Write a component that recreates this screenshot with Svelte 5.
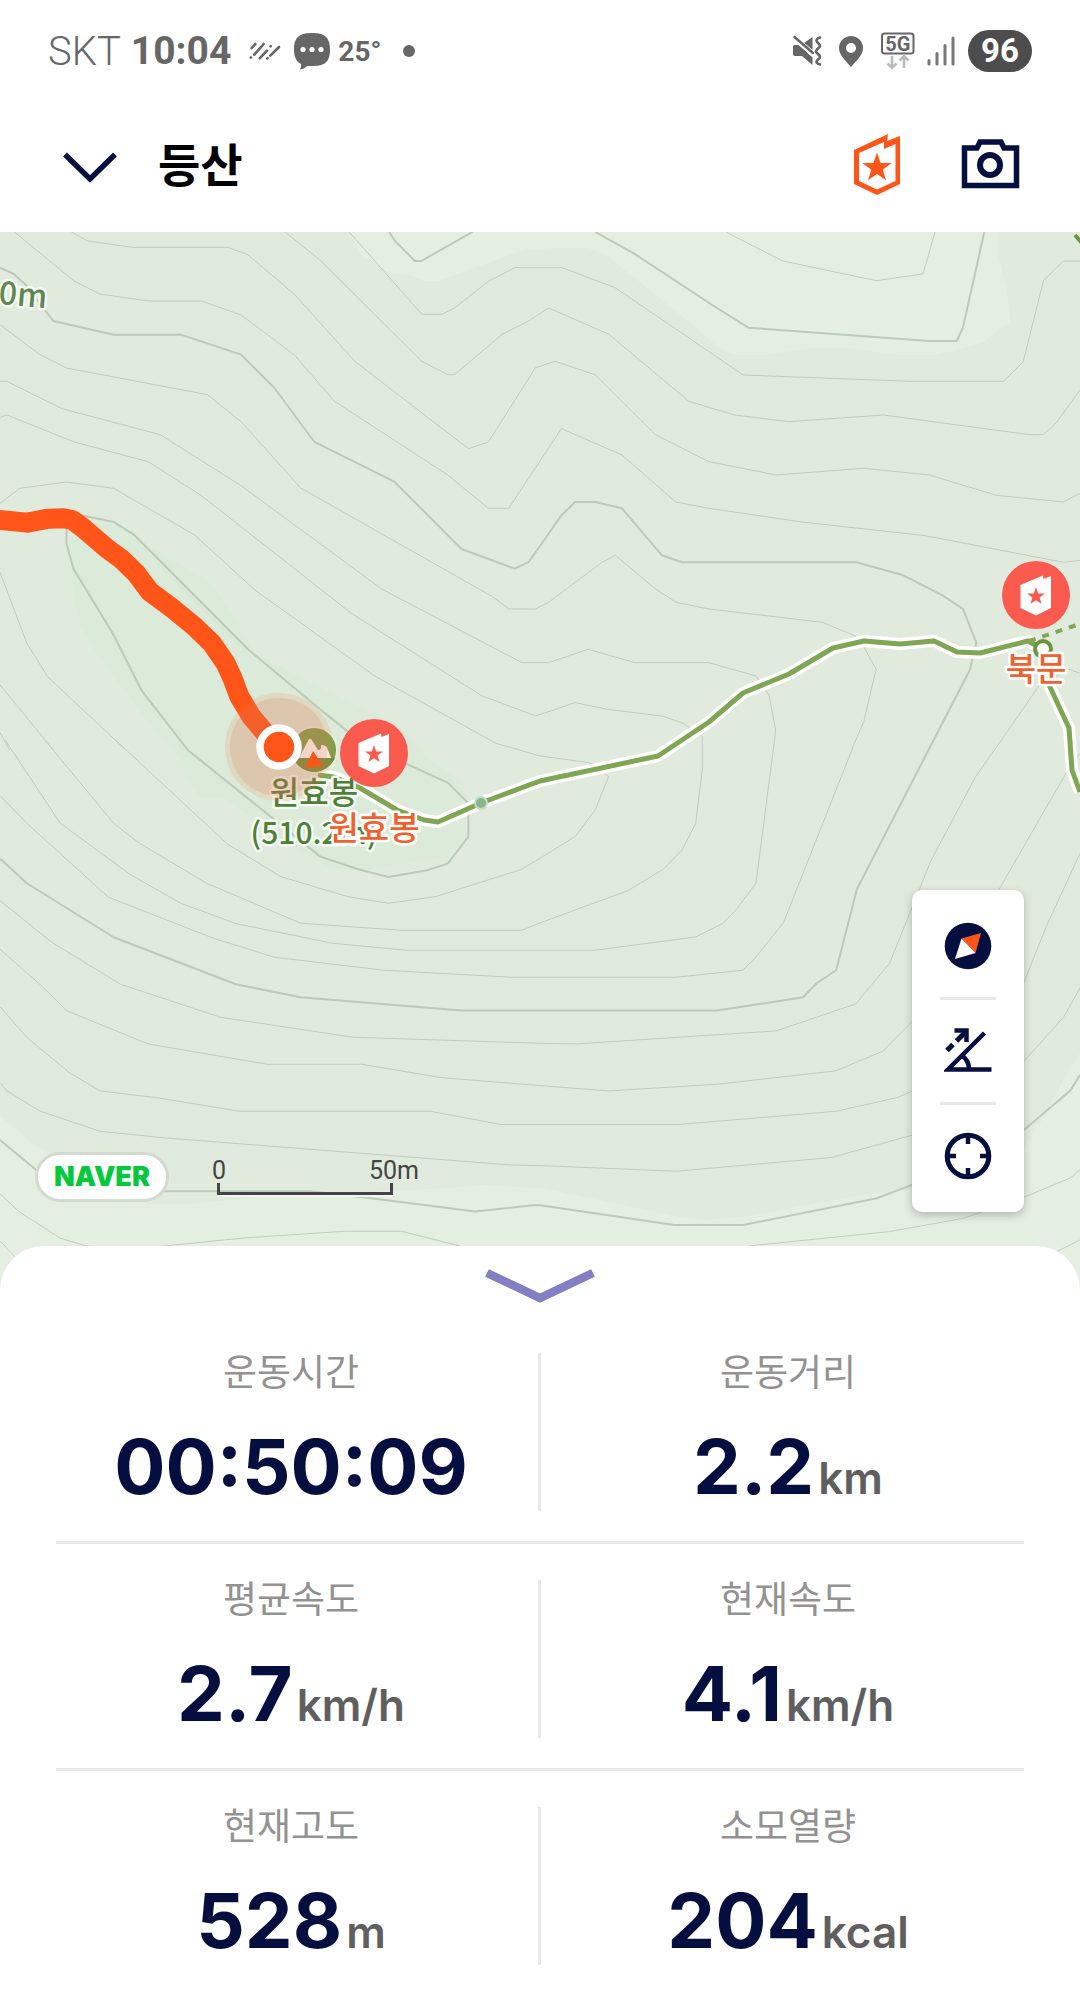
<script>
  const NAVY = '#040f40';

  // Contour lines, one entry per survey tile; x and y are the tile's origin in sheet units.
  const tiles = [
    {
      x: 0,
      y: 0,
      minor: [
        '207,6 255,33 385,52 661,52 718,73 855,193 1030,394 1360,656 1418,636 1555,413 1568,409',
        '42,6 215,153 290,192 430,213 585,213 700,255 855,375 970,513 1300,735 1418,835 1477,835 1568,693',
        '828,6 932,93 1225,394 1300,434 1320,434 1458,313 1535,273 1568,250',
        '1014,6 1225,253 1283,253 1320,234 1418,154 1495,113 1568,113',
        '0,284 115,373 193,414 602,494 700,575 873,774 1430,1100 1477,1137 1555,1137 1568,1130',
        '0,454 20,454 180,536 465,614 700,767 1108,1077 1515,1298 1568,1298',
        '0,562 20,555 215,636 430,695 585,797 1020,1150 1400,1398 1555,1458 1568,1454',
        '0,820 58,775 193,756 330,775 565,915 740,1080 1088,1338 1440,1540 1568,1578',
        '0,1027 78,1240 138,1340 365,1560',
        '0,1365 155,1560',
        '0,1508 28,1560'
      ],
      major: [
        '0,113 40,132 75,165 130,240 155,273 330,314 525,314 700,374 797,474 913,636 1146,756 1340,957 1495,1016 1535,996 1568,948',
        '1130,6 1147,33 1205,93 1223,93 1372,6',
        '193,880 193,940 213,1016 330,1215 412,1383 545,1560 930,1880 1040,1918 1128,1941 1240,1921 1300,1901 1360,1820 1360,1720 1300,1658 1180,1602 1010,1505 920,1430 720,1258 390,915 330,876 235,856'
      ]
    },
    {
      x: 1568,
      y: 0,
      minor: [
        '0,693 62,596 238,675 394,816 490,835 760,876 1118,917 1520,997 1568,991',
        '0,409 44,394 160,434 335,614 490,695 685,735 940,715 1130,735 1325,796 1520,816 1568,790',
        '0,250 25,234 200,313 432,514 565,555 722,575 997,555 1420,614 1462,614 1500,577 1568,480',
        '0,113 64,113 218,173 590,435 1075,454 1346,454 1403,395 1462,152 1520,93 1568,93',
        '540,6 600,38 705,93 976,152 1112,132 1147,6',
        '471,1530 471,1518 415,1480 358,1459 195,1438 102,1418 0,1454',
        '681,1530 684,1500 665,1395 627,1338 490,1298 275,1298 140,1258 25,1298 0,1298',
        '917,1530 940,1475 976,1318 940,1250 915,1218 820,1177 490,1137 395,1117 335,1077 219,976 180,997 25,1117 0,1130',
        '1340,1530 1450,1366 1535,1318 1568,1330'
      ],
      major: [
        '160,6 275,72 500,225 605,293 1130,333 1210,333 1228,293 1290,6',
        '1143,1530 1248,1320 1267,1238 1228,1137 1170,1097 1055,1036 918,997 412,997 354,976 238,835 160,816 102,816 62,856 0,948'
      ]
    },
    {
      x: 0,
      y: 1530,
      minor: [
        '335,0 660,312 815,410 1010,470 1128,490 1265,470 1515,388 1568,355',
        '130,0 330,250 405,310 600,430 873,550 1165,571 1515,571 1568,549',
        '15,0 175,250 380,405 525,490 685,551 965,610 1180,631 1568,631',
        '0,167 78,250 315,472 620,595 797,652 1115,691 1490,712 1568,712',
        '0,482 150,607 350,733 640,832 1025,892 1568,910',
        '0,628 120,737 193,812 430,912 775,973 1050,973 1280,1013 1568,1037',
        '0,800 78,893 200,997 290,1053 460,1074 695,1114 1250,1114 1455,1154 1568,1154',
        '0,1028 20,1053 115,1113 290,1174 480,1194 1480,1275 1568,1277',
        '0,1362 55,1415 175,1495 250,1518 360,1530 480,1518 700,1495 1000,1474 1165,1474 1335,1518',
        '0,1503 42,1550'
      ],
      major: [
        '0,356 78,430 330,592 685,733 873,772 1340,812 1568,812',
        '0,1200 105,1290 180,1354 900,1354 1060,1373 1380,1415 1555,1395 1568,1396'
      ]
    },
    {
      x: 1568,
      y: 1530,
      minor: [
        '0,355 102,290 160,210 199,110 185,100 143,68 0,48',
        '0,549 255,452 358,388 412,331 452,250 471,90 471,0',
        '0,631 160,631 452,591 528,552 565,515 627,430 681,0',
        '0,712 395,712 588,691 620,660 707,548 917,0',
        '0,910 105,912 685,873 917,792 1015,670 1135,362 1265,110 1340,0',
        '0,1037 200,1053 515,1033 858,993 995,934 1080,845 1180,740 1333,448 1530,95 1568,40',
        '0,1154 400,1154 860,1114 1037,1073 1080,1054 1290,920 1405,728 1470,560 1568,340',
        '0,1277 395,1294 845,1253 1080,1186 1300,1080 1405,964 1520,832 1568,745',
        '607,1518 1015,1475 1230,1435 1405,1372 1540,1314 1568,1290',
        '1480,1546 1568,1500'
      ],
      major: [
        '0,812 515,812 764,772 803,730 860,691 920,448 1143,0',
        '0,1396 390,1455 590,1455 978,1375 1080,1335 1300,1250 1405,1170 1540,1052 1568,1005'
      ]
    }
  ];

  const lowland = [
    '1014,6 1050,75 1130,128 1185,135 1235,153 1270,153 1400,105 1530,56 1708,54 1768,80 1988,265 2098,360 2138,375 2218,375 2358,353 2468,355 2618,375 2718,375 2853,338 2888,310 2933,275 2923,180 2896,60 2896,6',
    '0,2660 100,2745 220,2820 430,2923 540,2923 780,2900 1300,2875 1400,2865 1568,2875 1668,2895 1968,2960 2048,2970 2168,2960 2498,2895 2648,2880 2968,2760 3038,2650 3098,2530 3136,2470 3136,3180 0,3180'
  ];
  const summit =
    '200,870 350,890 450,960 600,1050 640,1100 740,1270 1000,1410 1150,1480 1250,1590 1330,1645 1360,1720 1345,1830 1300,1880 1050,1920 960,1915 800,1820 650,1702 580,1702 530,1620 520,1580 440,1490 280,1270 235,1190 215,1110';

  const trail =
    '318,775 334,777 360,788 397,810 424,820 438,822 481,803 540,781 658,756 709,722 743,693 789,674 833,648 864,641 900,644 934,641 957,652 980,653 1028,641 1043,649 1050,687 1069,728 1072,770 1080,792';
  const walked =
    '-10,869 80,878 140,866 185,865 210,870 240,893 310,955 350,985 395,1030 435,1085 500,1135 565,1190 615,1240 655,1300 675,1345 695,1400 730,1460 805,1552';

  const checkpoints = [
    { name: '원효봉', x: 374, y: 753, labelY: 840 },
    { name: '북문', x: 1036, y: 595, labelY: 681 }
  ];

  const rows = [
    [
      { label: '운동시간', value: '00:50:09', unit: '' },
      { label: '운동거리', value: '2.2', unit: 'km' }
    ],
    [
      { label: '평균속도', value: '2.7', unit: 'km/h' },
      { label: '현재속도', value: '4.1', unit: 'km/h' }
    ],
    [
      { label: '현재고도', value: '528', unit: 'm' },
      { label: '소모열량', value: '204', unit: 'kcal' }
    ]
  ];
</script>

<div class="screen">
  <div class="status">
    <div class="status-group">
      <span class="carrier">SKT</span>
      <span class="clock">10:04</span>
      <svg class="rain" width="34" height="24" viewBox="0 0 34 24" fill="none" stroke="#666" stroke-width="2.600" stroke-linecap="round">
        <path d="M7.300 5L3.700 9M15.700 5L6.300 15.700M3 18.500l-.200.200M22.700 7.200l-.200.200M19 11.700L11.700 19.300M31 8L22.300 16.700M19.500 19.200l-.200.300" />
      </svg>
      <svg class="bubble" width="36" height="38" viewBox="0 0 36 38">
        <path fill="#666" d="M18 1C29 1 36 4 36 17.500S30 34 18 34H13C11 36 8 37.500 6 37.500C7 35.500 7.300 34 7 32C2.500 30 0 25 0 17.500C0 4 7 1 18 1z" />
        <g fill="#fff"><circle cx="9" cy="17.500" r="2.600" /><circle cx="18" cy="17.500" r="2.600" /><circle cx="27" cy="17.500" r="2.600" /></g>
      </svg>
      <span class="temp">25°</span>
      <span class="more"></span>
    </div>
    <div class="status-group">
      <svg class="mute" width="30" height="32" viewBox="0 0 30 32">
        <path fill="#666" d="M20.500 2v13L12 8zM1 11.500C1 10.500 2 10 3 10h4L20.500 22.500V30L10 21H3C1.500 21 1 20 1 19z" />
        <path d="M2.500 3L21 19" stroke="#fff" stroke-width="5" />
        <path d="M2.500 2L21 18" stroke="#666" stroke-width="2.400" stroke-linecap="round" />
        <path d="M28 2.500q-5 1.500-3 4.500l2 2q2 2 0 3.500l-2 2q-2 2 0 3.500l2 2q2 2 0 3.500l-2 2q-2 2.500 3 4" fill="none" stroke="#666" stroke-width="2.600" stroke-linecap="round" />
      </svg>
      <svg class="pin" width="24" height="31" viewBox="0 0 24 31">
        <path fill="#666" fill-rule="evenodd" d="M12 0a12 12 0 0 1 12 12c0 7-6 12-12 19C6 24 0 19 0 12A12 12 0 0 1 12 0zm0 7a5 5 0 1 0 0 10a5 5 0 0 0 0-10z" />
      </svg>
      <svg class="network" width="34" height="38" viewBox="0 0 34 38">
        <rect x="1" y="1.500" width="31.500" height="20" rx="2.500" fill="none" stroke="#666" stroke-width="2" />
        <text x="16.800" y="18.500" text-anchor="middle">5G</text>
        <path d="M11 24v12M6.500 31.500L11 36l4.500-4.500M23 36V24M18.500 28.500L23 24l4.500 4.500" fill="none" stroke="#bbb" stroke-width="2.600" />
      </svg>
      <svg class="signal" width="28" height="30" viewBox="0 0 28 30" stroke="#777" stroke-width="3" stroke-linecap="round">
        <path d="M2 24.500V28M10 17.500V28M18 9.500V28M26 2V28" />
      </svg>
      <span class="battery">96</span>
    </div>
  </div>

  <header class="bar">
    <button class="icon-button" aria-label="뒤로">
      <svg width="60" height="60" viewBox="0 0 60 60" fill="none" stroke={NAVY} stroke-width="5.500">
        <path d="M5 19.500L30 44L55 19.500" />
      </svg>
    </button>
    <h1>등산</h1>
    <button class="icon-button badge-button" aria-label="배지">
      <svg width="60" height="64" viewBox="0 0 60 64" fill="#ff5518">
        <path fill-rule="evenodd" d="M7 17L41 1L40 8L53 3V51L30 62L7 51zM12 20V48L30 56.500L48.500 48V11L37 16V9z" />
        <path d="M30 19.500l3.600 10.400 11 .200-8.800 6.600 3.200 10.500-9-6.300-9 6.300 3.200-10.500-8.800-6.600 11-.200z" />
      </svg>
    </button>
    <button class="icon-button" aria-label="사진 촬영">
      <svg width="60" height="60" viewBox="0 0 60 60" fill="none" stroke={NAVY}>
        <path stroke-width="5.500" d="M4.500 13H17L20 7H41L44 13H56.500V50.500H4.500z" />
        <circle cx="30" cy="30" r="10" stroke-width="6" />
      </svg>
    </button>
  </header>

  <section class="map" aria-label="지도">
    <svg class="terrain" viewBox="0 232 1080 1058" preserveAspectRatio="xMidYMax slice">
      <g transform="translate(0 230) scale(.3444 .3333)">
        {#each lowland as points}
          <polygon {points} fill="#e4efe2" />
        {/each}
        <polygon points={summit} fill="#dbead9" />
        {#each tiles as tile}
          <g transform="translate({tile.x} {tile.y})">
            {#each tile.minor as points}
              <polyline class="minor" {points} />
            {/each}
            {#each tile.major as points}
              <polyline class="major" {points} />
            {/each}
          </g>
        {/each}
      </g>

      <polyline class="casing" points={trail} />
      <polyline class="trail" points={trail} />
      <path d="M1029 641L1080 624" stroke="#7fa653" stroke-width="4" stroke-dasharray="7 7" />
      <path d="M1075 235L1082 243" stroke="#6a953c" stroke-width="4" />
      <circle cx="481" cy="803" r="6" fill="#8cb48e" stroke="#c4dcc4" stroke-width="2" />
      <circle cx="1043" cy="649" r="8" fill="#fff" stroke="#6a953c" stroke-width="4" />

      <g transform="translate(0 230) scale(.3444 .3333)">
        <polyline class="walked" points={walked} />
      </g>

      <circle cx="314" cy="750" r="23" fill="#7d9f4b" stroke="#e5f0dc" stroke-width="2" />
      <path d="M293 758h42a23 23 0 0 1-42 0z" fill="#6d8f3c" />
      <path d="M299 758L309 739Q311 738 313 742L318 750Q322 750 321 745Q327 745 328 750L331 758z" fill="#fff" />
      <text class="place" x="-2" y="304" transform="rotate(5 0 304)" fill="#5f8751">0m</text>
      <text class="place" x="314" y="804" text-anchor="middle" fill="#4f7f3a">원효봉</text>
      <text class="place height" x="314" y="844" text-anchor="middle" fill="#4f7f3a">(510.2m)</text>

      <circle cx="279" cy="747" r="54" fill="#f0833c" opacity=".16" />
      <circle cx="279" cy="747" r="49" fill="#d0705e" opacity=".18" />
      <path d="M313 751L323 766L305 768z" fill="#ff5518" />
      <circle cx="279" cy="747" r="19" fill="#ff5518" stroke="#fff" stroke-width="7.500" />

      {#each checkpoints as c}
        <g transform="translate({c.x} {c.y})">
          <circle r="34" fill="#fb5a4e" />
          <path fill="#fff" d="M-15.500-10L7-19.500L7.500-16L15-19V13L0 20.500L-15.500 13z" />
          <path fill="#fb5a4e" d="M0-8l2.200 6.400 6.800.100-5.400 4.100 2 6.500-5.600-3.900-5.600 3.900 2-6.500-5.400-4.100 6.800-.100z" />
        </g>
        <text class="place checkpoint" x={c.x} y={c.labelY} text-anchor="middle">{c.name}</text>
      {/each}
    </svg>

    <div class="overlay">
      <a class="naver" href="#naver">NAVER</a>
      <div class="scale">
        <div class="scale-labels"><span>0</span><span>50m</span></div>
        <div class="scale-bar"></div>
      </div>
      <div class="tools">
        <button aria-label="나침반">
          <svg width="48" height="48" viewBox="0 0 48 48">
            <circle cx="24" cy="24" r="23.300" fill={NAVY} />
            <path d="M37 11L17.500 16.500L31.500 31z" fill="#ff5518" />
            <path d="M11 37L17.500 16.500L31.500 31z" fill="#fff" />
          </svg>
        </button>
        <hr />
        <button aria-label="경사도">
          <svg width="48" height="48" viewBox="0 0 48 48" fill="none" stroke={NAVY}>
            <path stroke-width="4.500" d="M40.500 6L4 42.500H47.500M17.500 28.500Q25 33 25 42" />
            <path stroke-width="5" d="M3 23.500L9 17.500M12.500 14L22 4.500" />
            <path stroke-width="4.500" d="M10.500 3.500H22.500V15" />
          </svg>
        </button>
        <hr />
        <button aria-label="현재 위치">
          <svg width="48" height="48" viewBox="0 0 48 48" fill="none" stroke={NAVY}>
            <circle cx="24" cy="24" r="20.800" stroke-width="5" />
            <path stroke-width="4.500" d="M24 2V12M24 36V46M2 24H12M36 24H46" />
          </svg>
        </button>
      </div>
    </div>
  </section>

  <section class="sheet">
    <button class="handle" aria-label="접기">
      <svg width="110" height="34" viewBox="0 0 110 34" fill="none" stroke="#827fc5" stroke-width="8.500">
        <path d="M2 4L55 29L108 4" />
      </svg>
    </button>
    {#each rows as row}
      <dl class="row">
        {#each row as item}
          <div class="stat">
            <dt>{item.label}</dt>
            <dd>
              <span class="value">{item.value}</span>{#if item.unit}<span class="unit">{item.unit}</span>{/if}
            </dd>
          </div>
        {/each}
      </dl>
    {/each}
  </section>
</div>

<style>
  :global(body) {
    margin: 0;
    background: #fff;
  }
  .screen {
    font-family: Inter, 'Noto Sans CJK KR', sans-serif;
    color: #040f40;
    background: #fff;
    overflow: hidden;
  }
  svg {
    display: block;
    flex: none;
  }
  button {
    border: 0;
    padding: 0;
    background: none;
    cursor: pointer;
  }

  .status {
    display: flex;
    justify-content: space-between;
    align-items: center;
    height: 102px;
    padding: 0 48px;
    font-family: Roboto, sans-serif;
    color: #666;
  }
  .status-group {
    display: flex;
    align-items: center;
  }
  .carrier {
    font-size: 40px;
    font-weight: 300;
  }
  .clock {
    margin-left: 10px;
    font-size: 39px;
    font-weight: 700;
  }
  .rain {
    margin-left: 17px;
  }
  .bubble {
    margin-left: 12px;
  }
  .temp {
    margin-left: 8px;
    font-size: 28px;
    font-weight: 700;
  }
  .more {
    width: 12px;
    height: 12px;
    margin-left: 22px;
    border-radius: 50%;
    background: #666;
  }
  .pin {
    margin-left: 17px;
  }
  .network {
    margin-left: 18px;
  }
  .network text {
    font-size: 20px;
    font-weight: 700;
    fill: #666;
  }
  .signal {
    margin-left: 12px;
  }
  .battery {
    width: 64px;
    margin-left: 13px;
    border-radius: 21px;
    background: #4d4d4d;
    color: #fff;
    font-size: 33px;
    font-weight: 700;
    line-height: 42px;
    text-align: center;
  }

  .bar {
    box-sizing: border-box;
    display: flex;
    align-items: center;
    height: 130px;
    padding: 0 60px 5px;
  }
  h1 {
    flex: 1;
    margin: 0 0 0 38px;
    color: #000;
    font-size: 46px;
    font-weight: 700;
    line-height: 60px;
  }
  .badge-button {
    margin-right: 53px;
  }

  .map {
    position: relative;
    height: 1058px;
    background: #e0ebde;
  }
  .terrain {
    width: 100%;
    height: 100%;
  }
  .terrain polyline {
    fill: none;
    stroke-linejoin: round;
  }
  .minor,
  .major,
  .walked {
    vector-effect: non-scaling-stroke;
  }
  .minor {
    stroke: #c2ccbe;
    stroke-width: 1;
  }
  .major {
    stroke: #bccab8;
    stroke-width: 2;
  }
  .casing {
    stroke: #fff;
    stroke-width: 12;
  }
  .trail {
    stroke: #7fa653;
    stroke-width: 5;
  }
  .walked {
    stroke: #ff5518;
    stroke-width: 20;
  }
  .place {
    font-family: 'Noto Sans CJK KR', sans-serif;
    font-size: 32px;
    font-weight: 500;
    stroke: #f4f9f2;
    stroke-width: 5px;
    stroke-linejoin: round;
    paint-order: stroke;
  }
  .height {
    font-size: 30px;
  }
  .checkpoint {
    fill: #f2602c;
    stroke: #fff;
    font-size: 33px;
  }

  .overlay {
    position: absolute;
    right: 56px;
    bottom: 78px;
    left: 35px;
    display: flex;
    align-items: flex-end;
  }
  .naver {
    width: 128px;
    margin-bottom: 10px;
    border: 3px solid #d3dbd1;
    border-radius: 25px;
    background: #fff;
    color: #06c83c;
    font-size: 27px;
    font-weight: 900;
    line-height: 44px;
    text-align: center;
    text-decoration: none;
  }
  .scale {
    width: 207px;
    margin: 0 auto 17px 43px;
    color: #444;
    font-family: Roboto, sans-serif;
    font-size: 25px;
    line-height: 24px;
  }
  .scale-labels {
    display: flex;
    justify-content: space-between;
  }
  .scale-bar {
    box-sizing: border-box;
    width: 176px;
    height: 12px;
    margin-left: 5px;
    border: 3px solid #444;
    border-top: 0;
    box-shadow: 0 2px 0 #f0f5ef;
  }
  .tools {
    width: 112px;
    padding: 5px 0;
    border-radius: 10px;
    background: #fff;
    box-shadow: 0 3px 8px rgba(40, 60, 40, 0.3);
  }
  .tools button {
    display: flex;
    align-items: center;
    justify-content: center;
    width: 100%;
    height: 102px;
  }
  .tools hr {
    width: 56px;
    height: 3px;
    margin: 0 auto;
    border: 0;
    background: #e8e8e8;
  }

  .sheet {
    position: relative;
    margin-top: -44px;
    border-radius: 44px 44px 0 0;
    background: #fff;
  }
  .handle {
    display: flex;
    justify-content: center;
    width: 100%;
    height: 71px;
    padding-top: 23px;
  }
  .row {
    display: grid;
    grid-template-columns: 1fr 1fr;
    margin: 0 56px;
    padding: 36px 0 30px;
  }
  .row + .row {
    border-top: 3px solid #e8e8e8;
  }
  .stat {
    height: 158px;
    text-align: center;
  }
  .stat:first-child {
    padding-right: 12px;
    margin-right: -1px;
    border-right: 3px solid #e8e8e8;
  }
  .stat:last-child {
    padding-left: 12px;
  }
  dt {
    color: #929292;
    font-family: 'Noto Sans CJK KR', sans-serif;
    font-size: 37px;
    line-height: 34px;
  }
  dd {
    display: flex;
    justify-content: center;
    align-items: baseline;
    gap: 4px;
    margin: 32px 0 0;
    line-height: 94px;
  }
  .value {
    font-size: 76px;
    font-weight: 700;
  }
  .unit {
    color: #5f5f5f;
    font-size: 44px;
    font-weight: 600;
  }
</style>
